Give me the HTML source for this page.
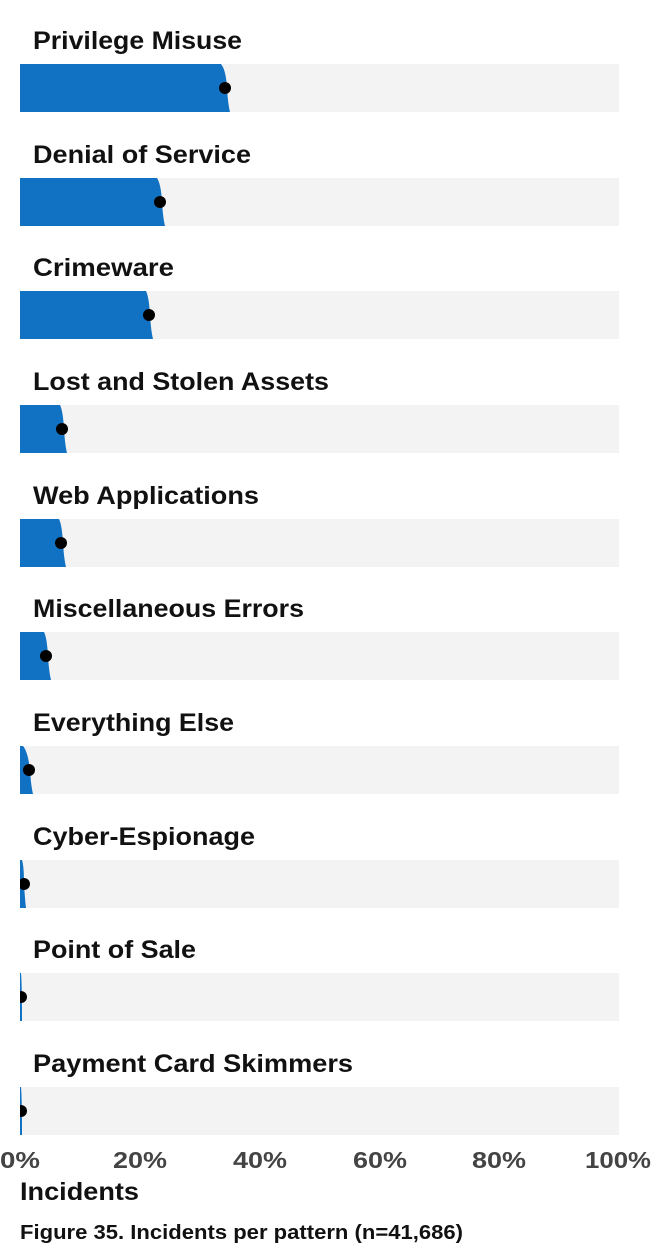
<!DOCTYPE html>
<html><head><meta charset="utf-8"><style>
html,body{margin:0;padding:0;background:#fff;width:672px;height:1260px;overflow:hidden}
svg{display:block}
text{font-family:"Liberation Sans",Arial,sans-serif;font-weight:bold}
</style></head><body>
<svg width="672" height="1260" viewBox="0 0 672 1260">
<defs><clipPath id="c"><rect x="20" y="0" width="600" height="1260"/></clipPath></defs>
<g font-size="25" fill="#111" lengthAdjust="spacingAndGlyphs">
<text x="33" y="49" textLength="209" lengthAdjust="spacingAndGlyphs">Privilege Misuse</text>
<text x="33" y="163" textLength="218" lengthAdjust="spacingAndGlyphs">Denial of Service</text>
<text x="33" y="276" textLength="141" lengthAdjust="spacingAndGlyphs">Crimeware</text>
<text x="33" y="390" textLength="296" lengthAdjust="spacingAndGlyphs">Lost and Stolen Assets</text>
<text x="33" y="504" textLength="226" lengthAdjust="spacingAndGlyphs">Web Applications</text>
<text x="33" y="617" textLength="271" lengthAdjust="spacingAndGlyphs">Miscellaneous Errors</text>
<text x="33" y="731" textLength="201" lengthAdjust="spacingAndGlyphs">Everything Else</text>
<text x="33" y="845" textLength="222" lengthAdjust="spacingAndGlyphs">Cyber-Espionage</text>
<text x="33" y="958" textLength="163" lengthAdjust="spacingAndGlyphs">Point of Sale</text>
<text x="33" y="1072" textLength="320" lengthAdjust="spacingAndGlyphs">Payment Card Skimmers</text>
</g>
<g fill="#f3f3f3">
<rect x="20" y="64" width="599" height="48"/><rect x="20" y="178" width="599" height="48"/>
<rect x="20" y="291" width="599" height="48"/><rect x="20" y="405" width="599" height="48"/>
<rect x="20" y="519" width="599" height="48"/><rect x="20" y="632" width="599" height="48"/>
<rect x="20" y="746" width="599" height="48"/><rect x="20" y="860" width="599" height="48"/>
<rect x="20" y="973" width="599" height="48"/><rect x="20" y="1087" width="599" height="48"/>
</g>
<g fill="#1172c4" clip-path="url(#c)">
<path d="M20,64H221Q226,70 227,88Q228,104 230,112H20Z"/>
<path d="M20,178H157Q161,184 162,202Q163,218 165,226H20Z"/>
<path d="M20,291H146Q149,297 150,315Q151,331 153,339H20Z"/>
<path d="M20,405H60Q63,411 64,429Q65,445 67,453H20Z"/>
<path d="M20,519H59Q62,525 63,543Q64,559 66,567H20Z"/>
<path d="M20,632H44Q47,638 48,656Q49,672 51,680H20Z"/>
<path d="M20,746H23Q28,752 30,770Q31,786 33,794H20Z"/>
<path d="M20,860H22Q24,866 24,884Q25,900 26,908H20Z"/>
<path d="M20,973H21Q22,985 22,1021H20Z"/>
<path d="M20,1087H21Q22,1099 22,1135H20Z"/>
</g>
<g fill="#000" clip-path="url(#c)">
<circle cx="225" cy="88" r="6"/><circle cx="160" cy="202" r="6"/>
<circle cx="149" cy="315" r="6"/><circle cx="62" cy="429" r="6"/>
<circle cx="61" cy="543" r="6"/><circle cx="46" cy="656" r="6"/>
<circle cx="29" cy="770" r="6"/><circle cx="24" cy="884" r="6"/>
<circle cx="21" cy="997" r="6"/><circle cx="21" cy="1111" r="6"/>
</g>
<g font-size="23" fill="#444">
<text x="0" y="1168" textLength="40" lengthAdjust="spacingAndGlyphs">0%</text>
<text x="113" y="1168" textLength="54" lengthAdjust="spacingAndGlyphs">20%</text>
<text x="233" y="1168" textLength="54" lengthAdjust="spacingAndGlyphs">40%</text>
<text x="353" y="1168" textLength="54" lengthAdjust="spacingAndGlyphs">60%</text>
<text x="472" y="1168" textLength="54" lengthAdjust="spacingAndGlyphs">80%</text>
<text x="585" y="1168" textLength="66" lengthAdjust="spacingAndGlyphs">100%</text>
</g>
<text x="20" y="1200" font-size="25" fill="#111" textLength="119" lengthAdjust="spacingAndGlyphs">Incidents</text>
<text x="20" y="1239" font-size="20" fill="#111" textLength="443" lengthAdjust="spacingAndGlyphs">Figure 35. Incidents per pattern (n=41,686)</text>
</svg>
</body></html>
